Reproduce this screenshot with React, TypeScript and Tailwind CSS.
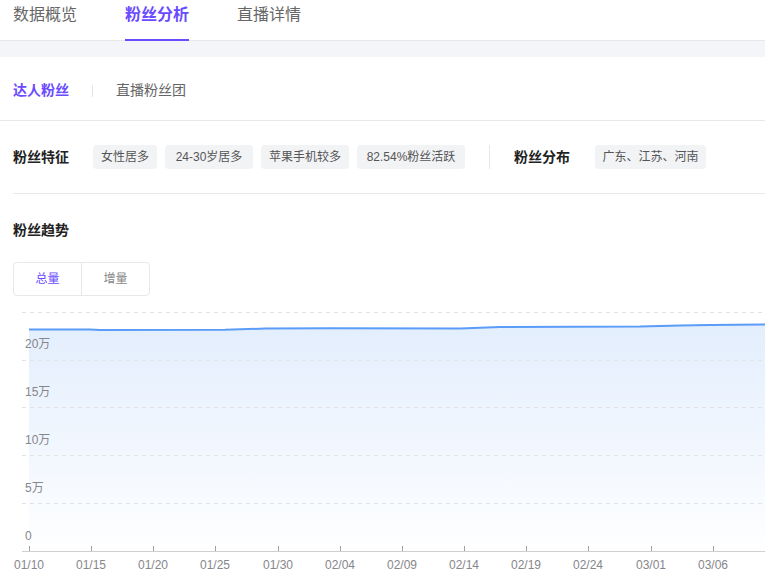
import React from "react";

const FONT = '"Liberation Sans", "Noto Sans CJK SC", sans-serif';

const xTicks = [
  { x: 29, l: "01/10" },
  { x: 91, l: "01/15" },
  { x: 153, l: "01/20" },
  { x: 215, l: "01/25" },
  { x: 278, l: "01/30" },
  { x: 340, l: "02/04" },
  { x: 402, l: "02/09" },
  { x: 464, l: "02/14" },
  { x: 526, l: "02/19" },
  { x: 588, l: "02/24" },
  { x: 651, l: "03/01" },
  { x: 713, l: "03/06" },
];

const linePts: [number, number][] = [
  [29, 29.5],
  [90, 29.5],
  [100, 30],
  [225, 29.8],
  [265, 28.6],
  [330, 28.3],
  [460, 28.4],
  [500, 26.9],
  [640, 26.6],
  [680, 25.4],
  [710, 25],
  [765, 24.6],
];

function Chart() {
  const d = linePts.map((p, i) => `${i ? "L" : "M"}${p[0]} ${p[1]}`).join(" ");
  const area = `${d} L765 251 L29 251 Z`;
  const grid = [12, 60, 107, 155, 203];
  const yl = [
    { y: 45, l: "20万" },
    { y: 93, l: "15万" },
    { y: 141, l: "10万" },
    { y: 189, l: "5万" },
    { y: 237, l: "0" },
  ];
  return (
    <svg width="765" height="286" viewBox="0 0 765 286" className="block" style={{ fontFamily: FONT }}>
      <defs>
        <linearGradient id="fill" x1="0" y1="0" x2="0" y2="1">
          <stop offset="0" stopColor="#e3eefd" />
          <stop offset="0.85" stopColor="#fafcff" />
          <stop offset="1" stopColor="#ffffff" />
        </linearGradient>
      </defs>
      <path d={area} fill="url(#fill)" />
      {grid.map((g) => (
        <line key={g} x1="22" x2="765" y1={g + 0.5} y2={g + 0.5} stroke="#e3e3e6" strokeDasharray="4 4" />
      ))}
      <path d={d} fill="none" stroke="#5a9cf8" strokeWidth="2" />
      {yl.map((t) => (
        <text key={t.l} x="25" y={t.y} dominantBaseline="middle" fontSize="12" fill="#86868b">
          {t.l}
        </text>
      ))}
      <line x1="22" x2="765" y1="251.5" y2="251.5" stroke="#d0d0d0" />
      {xTicks.map((t) => (
        <g key={t.l}>
          <line x1={t.x + 0.5} x2={t.x + 0.5} y1="246" y2="251" stroke="#a0a0a0" />
          <text x={t.x} y="266" textAnchor="middle" dominantBaseline="middle" fontSize="12" fill="#86868b">
            {t.l}
          </text>
        </g>
      ))}
    </svg>
  );
}

function Tag({ children, w }: { children: React.ReactNode; w: string }) {
  return (
    <span className={`${w} h-[24px] flex items-center justify-center rounded-[4px] bg-[#f2f3f5] text-[12px] text-[#555]`}>
      {children}
    </span>
  );
}

export default function App() {
  return (
    <div className="w-[765px] h-[586px] overflow-hidden bg-white" style={{ fontFamily: FONT }}>
      {/* top tabs */}
      <div className="h-[41px] border-b border-[#e8e8ec] flex px-[13px] gap-[48px]">
        <div className="h-full pt-[3px] text-[16px] leading-[24px] text-[#666]">数据概览</div>
        <div className="relative h-full pt-[3px] text-[16px] leading-[24px] font-bold text-[#6a4bff]">
          粉丝分析
          <div className="absolute left-0 right-0 bottom-[-1px] h-[2px] bg-[#6a4bff]" />
        </div>
        <div className="h-full pt-[3px] text-[16px] leading-[24px] text-[#666]">直播详情</div>
      </div>
      <div className="h-[16px] bg-[#f4f5f9]" />
      {/* sub tabs */}
      <div className="h-[64px] pt-[4px] border-b border-[#e8e8ec] flex items-center px-[13px]">
        <span className="text-[14px] font-bold text-[#6a4bff]">达人粉丝</span>
        <span className="mx-[23px] w-px h-[12px] bg-[#e5e5e5]" />
        <span className="text-[14px] text-[#666]">直播粉丝团</span>
      </div>
      {/* features */}
      <div className="ml-[13px] h-[73px] border-b border-[#e8e8ec] flex items-center">
        <span className="text-[14px] font-bold text-[#222] mr-[24px]">粉丝特征</span>
        <div className="flex gap-[8px]">
          <Tag w="w-[64px]">女性居多</Tag>
          <Tag w="w-[88px]">24-30岁居多</Tag>
          <Tag w="w-[88px]">苹果手机较多</Tag>
          <Tag w="w-[108px]">82.54%粉丝活跃</Tag>
        </div>
        <span className="mx-[24px] w-px h-[24px] bg-[#e8e8ec]" />
        <span className="text-[14px] font-bold text-[#222] mr-[25px]">粉丝分布</span>
        <Tag w="w-[111px]">广东、江苏、河南</Tag>
      </div>
      {/* trend */}
      <div className="px-[13px] pt-[26px]">
        <div className="text-[14px] leading-[20px] font-bold text-[#222]">粉丝趋势</div>
        <div className="mt-[22px] w-[137px] h-[34px] border border-[#e8e8ec] rounded-[4px] flex text-[12px]">
          <div className="flex-1 flex items-center justify-center text-[#6a4bff] border-r border-[#e8e8ec]">总量</div>
          <div className="flex-1 flex items-center justify-center text-[#888]">增量</div>
        </div>
      </div>
      <div className="mt-[4px]">
        <Chart />
      </div>
    </div>
  );
}
